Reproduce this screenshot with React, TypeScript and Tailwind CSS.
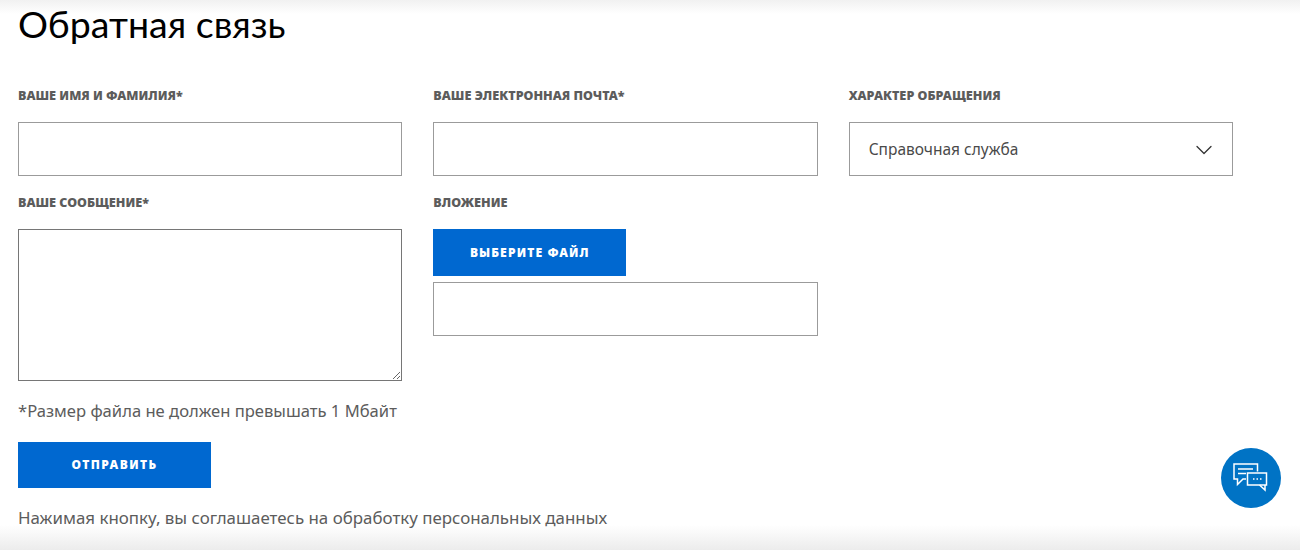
import React from "react";
import { ChevronDown } from "lucide-react";

function FieldLabel({ children }: { children: React.ReactNode }) {
    return <label className="block h-[33px] text-[12.5px] leading-[14px] font-black text-[#5c5c5c] uppercase">{children}</label>;
}

function ChatIcon() {
    return (
        <svg width="36" height="30" viewBox="0 0 36 30" fill="none" stroke="white" strokeWidth="1.5">
            <path d="M24.5 8.5V1H1v15h3.5v5.5l5.5-5.5h3" />
            <path d="M5 6h15M5 10.5h8" />
            <rect x="14.5" y="10" width="19" height="12" />
            <path d="M26.5 22l5.5 5v-5" />
            <path d="M20 16h1.5M23.5 16h1.5M27 16h1.5" strokeWidth="1.6" />
        </svg>
    );
}

export default function App() {
    return (
        <div className="relative h-[550px] w-[1300px] overflow-hidden bg-white font-['Noto_Sans','Lato',sans-serif]">
            <div className="absolute inset-x-0 top-0 h-[14px] bg-gradient-to-b from-[#f1f1f1] to-white" />
            <div className="absolute inset-x-0 bottom-0 h-[25px] bg-gradient-to-t from-[#ececec] to-white" />

            <div className="relative pl-[18px] pt-[4px]">
                <h1 className="font-['Lato'] text-[37.5px] leading-[40px] font-normal text-black">Обратная связь</h1>

                <div className="mt-[45px] grid w-[1215px] grid-cols-3 gap-x-[31px]">
                    <div>
                        <FieldLabel>Ваше имя и фамилия*</FieldLabel>
                        <input className="block h-[54px] w-full border border-[#9b9b9b] bg-white" />
                    </div>
                    <div>
                        <FieldLabel>Ваше электронная почта*</FieldLabel>
                        <input className="block h-[54px] w-full border border-[#9b9b9b] bg-white" />
                    </div>
                    <div>
                        <FieldLabel>Характер обращения</FieldLabel>
                        <div className="flex h-[54px] w-full items-center justify-between border border-[#9b9b9b] bg-white pl-[19px] pr-[14px] pt-[2px] text-[15.5px] text-[#4a4a4a]">
                            <span>Справочная служба</span>
                            <ChevronDown size={28} strokeWidth={1.1} className="text-[#333333]" />
                        </div>
                    </div>

                    <div className="mt-[20px]">
                        <FieldLabel>Ваше сообщение*</FieldLabel>
                        <textarea className="block h-[152px] w-full border border-[#767676] bg-white" />
                    </div>
                    <div className="mt-[20px]">
                        <FieldLabel>Вложение</FieldLabel>
                        <button className="flex h-[47px] w-[193px] items-center justify-center bg-[#0068d0] text-[12px] font-black tracking-[1.1px] text-white uppercase">
                            Выберите файл
                        </button>
                        <input className="mt-[6px] block h-[54px] w-full border border-[#9b9b9b] bg-white" />
                    </div>
                </div>

                <p className="mt-[20px] text-[16.6px] leading-[20px] text-[#5c5c5c]">*Размер файла не должен превышать 1 Мбайт</p>

                <button className="mt-[21px] flex h-[46px] w-[193px] items-center justify-center bg-[#0068d0] text-[12px] font-black tracking-[1.4px] text-white uppercase">
                    Отправить
                </button>

                <p className="mt-[20px] text-[16.9px] leading-[20px] text-[#5c5c5c]">Нажимая кнопку, вы соглашаетесь на обработку персональных данных</p>
            </div>

            <div className="absolute left-[1221px] top-[448px] flex h-[60px] w-[60px] items-center justify-center rounded-full bg-[#0073c5]">
                <ChatIcon />
            </div>
        </div>
    );
}
